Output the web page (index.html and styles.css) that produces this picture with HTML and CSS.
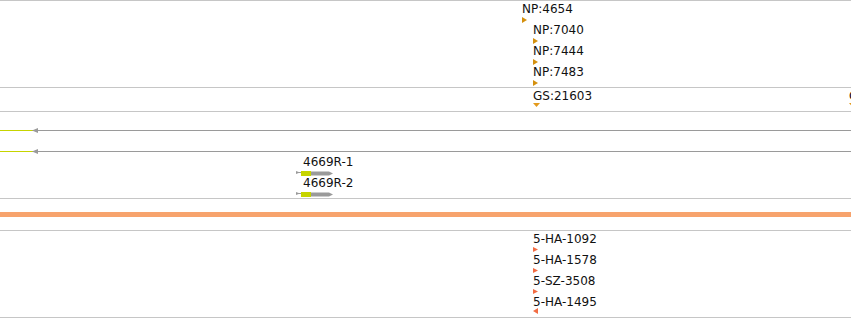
FILE: index.html
```html
<!doctype html>
<html lang="en">
<head>
  <meta charset="utf-8" />
  <meta name="viewport" content="width=device-width,initial-scale=1" />
  <title>Tracks</title>
  <link rel="stylesheet" href="styles.css">
</head>
<body>
  <div class="tracks">

    <!-- NP track -->
    <div class="track first">
      <div class="row">
        <div class="feat" style="left:522px">
          <span class="label">NP:4654</span>
          <svg class="tri np" width="6" height="6"><polygon points="0,0 5,3 0,6"/></svg>
        </div>
      </div>
      <div class="row">
        <div class="feat" style="left:533px">
          <span class="label">NP:7040</span>
          <svg class="tri np" width="6" height="6"><polygon points="0,0 5,3 0,6"/></svg>
        </div>
      </div>
      <div class="row">
        <div class="feat" style="left:533px">
          <span class="label">NP:7444</span>
          <svg class="tri np" width="6" height="6"><polygon points="0,0 5,3 0,6"/></svg>
        </div>
      </div>
      <div class="row">
        <div class="feat" style="left:533px">
          <span class="label">NP:7483</span>
          <svg class="tri np" width="6" height="6"><polygon points="0,0 5,3 0,6"/></svg>
        </div>
      </div>
    </div>

    <!-- GS track -->
    <div class="track">
      <div class="row">
        <div class="feat" style="left:533px">
          <span class="label">GS:21603</span>
          <svg class="down" width="7" height="4"><polygon points="0,0 7,0 3.5,4"/></svg>
        </div>
        <div class="feat" style="left:849px">
          <span class="label">GS:21688</span>
          <svg class="down" width="7" height="4"><polygon points="0,0 7,0 3.5,4"/></svg>
        </div>
      </div>
    </div>

    <!-- transcripts -->
    <div class="track">
      <div class="row lane">
        <svg class="strand" width="851" height="7">
          <line x1="0" y1="3.5" x2="34" y2="3.5" class="utr"/>
          <line x1="34" y1="3.5" x2="851" y2="3.5" class="intron"/>
          <polygon points="32,3.5 38,1 38,6" class="head"/>
        </svg>
      </div>
      <div class="row lane">
        <svg class="strand" width="851" height="7">
          <line x1="0" y1="3.5" x2="34" y2="3.5" class="utr"/>
          <line x1="34" y1="3.5" x2="851" y2="3.5" class="intron"/>
          <polygon points="32,3.5 38,1 38,6" class="head"/>
        </svg>
      </div>
      <div class="row">
        <div class="feat" style="left:296px">
          <span class="label gene">4669R-1</span>
          <svg class="gene-glyph" width="38" height="7">
            <polygon points="0,2 4,3.5 0,5" class="g-gray"/>
            <rect x="3" y="3" width="3" height="1" class="g-gray"/>
            <rect x="5" y="2" width="10" height="5" class="g-yellow"/>
            <rect x="15" y="2.5" width="18" height="4" class="g-gray"/>
            <polygon points="33,2.5 37,4.5 33,6.5" class="g-gray"/>
          </svg>
        </div>
      </div>
      <div class="row">
        <div class="feat" style="left:296px">
          <span class="label gene">4669R-2</span>
          <svg class="gene-glyph" width="38" height="7">
            <polygon points="0,2 4,3.5 0,5" class="g-gray"/>
            <rect x="3" y="3" width="3" height="1" class="g-gray"/>
            <rect x="5" y="2" width="10" height="5" class="g-yellow"/>
            <rect x="15" y="2.5" width="18" height="4" class="g-gray"/>
            <polygon points="33,2.5 37,4.5 33,6.5" class="g-gray"/>
          </svg>
        </div>
      </div>
    </div>

    <!-- coverage bar -->
    <div class="track bar-track">
      <div class="bar"></div>
    </div>

    <!-- HA track -->
    <div class="track">
      <div class="row">
        <div class="feat" style="left:533px">
          <span class="label">5-HA-1092</span>
          <svg class="tri ha" width="5" height="5"><polygon points="0,0 5,2.5 0,5"/></svg>
        </div>
      </div>
      <div class="row">
        <div class="feat" style="left:533px">
          <span class="label">5-HA-1578</span>
          <svg class="tri ha" width="5" height="5"><polygon points="0,0 5,2.5 0,5"/></svg>
        </div>
      </div>
      <div class="row">
        <div class="feat" style="left:533px">
          <span class="label">5-SZ-3508</span>
          <svg class="tri ha" width="5" height="5"><polygon points="0,0 5,2.5 0,5"/></svg>
        </div>
      </div>
      <div class="row">
        <div class="feat" style="left:533px">
          <span class="label">5-HA-1495</span>
          <svg class="tri ha rev" width="5" height="6"><polygon points="5,0 0,3 5,6"/></svg>
        </div>
      </div>
    </div>

  </div>
</body>
</html>
```

FILE: styles.css
```css
body { margin:0; padding:0; background:#fff; font-family:"DejaVu Sans", sans-serif; }
.tracks { width:851px; height:318px; overflow:hidden; }
.track { border-bottom:1px solid #c6c6c6; padding:1px 0; overflow:hidden; }
.track.first { border-top:1px solid #c6c6c6; }
.row { position:relative; height:21px; }
.row.lane { box-sizing:border-box; padding-top:14px; }
.feat { position:absolute; top:0; display:flex; flex-direction:column; align-items:flex-start; }
.label { font-size:12px; line-height:14px; color:#111; white-space:nowrap; }
.label.gene { margin-left:7px; }

.tri { display:block; margin-top:1px; }
.tri.np polygon { fill:#d4900e; }
.tri.ha polygon { fill:#f26c43; }
.tri.rev { margin-top:-1px; }
.down { display:block; }
.down polygon { fill:#e39a1c; }

.strand { display:block; }
.strand .utr { stroke:#c6d400; stroke-width:1; }
.strand .intron { stroke:#9a9a9a; stroke-width:1; }
.strand .head { fill:#9a9a9a; }

.gene-glyph { display:block; }
.g-gray { fill:#9a9a9a; }
.g-yellow { fill:#c6d400; }

.bar-track { padding:13px 0; }
.bar { height:5px; background:#f7a36d; }
```
